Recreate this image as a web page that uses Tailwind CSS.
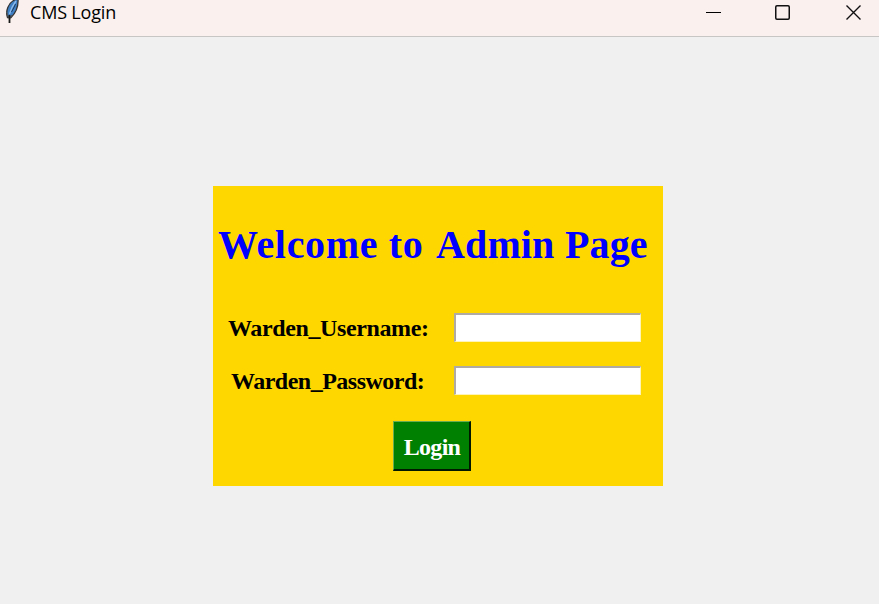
<!DOCTYPE html>
<html lang="en"><head><meta charset="utf-8"><title>CMS Login</title>
<script src="https://cdn.jsdelivr.net/npm/@tailwindcss/browser@4"></script></head>
<body class="w-[879px] h-[604px] overflow-hidden bg-[#f0f0f0] flex flex-col">
<header class="h-[37px] shrink-0 bg-[#faf0ee] border-b border-[#c8c6c5] flex items-start">
<svg class="w-[16px] h-[24px] ml-[4px]" viewBox="0 0 16 24"><path d="M3.500 17.500C1 11 4.500 3 10.500 0L14 -1C14.500 6 11.500 13 7 17.500Z" fill="#3f7fc4" stroke="#333" stroke-width="1.300"/><path d="M5.500 14C7 9 9 5 12 1" fill="none" stroke="#8fbdec" stroke-width="1.300"/><path d="M7.500 12C9 9 10.500 7 11.500 4" fill="none" stroke="#1d3c62" stroke-width="1"/><path d="M2.500 12L5.500 19L8 15" fill="none" stroke="#555" stroke-width="1"/><path d="M5.500 15V23" stroke="#191919" stroke-width="1.800"/></svg>
<span class="ml-[10px] text-[18px] leading-[24px] tracking-[-0.18px] font-['Open_Sans',sans-serif] text-black whitespace-nowrap">CMS Login</span>
<svg class="ml-auto w-[179px] h-[26px]" viewBox="0 0 179 26" fill="none" stroke="#111" stroke-width="1.4"><path d="M6 12.500H21" stroke="#000" stroke-width="1"/><rect x="75.750" y="5.750" width="13.500" height="13.500" rx="1.200" stroke-width="1.500"/><path d="M146.500 5.500L160.500 19.500M160.500 5.500L146.500 19.500"/></svg>
</header>
<main class="flex-1 pt-[149px] pl-[213px] font-['Liberation_Serif',serif] font-bold">
<section class="w-[450px] h-[300px] bg-[#ffd700] flex flex-col">
<h1 class="mt-[34px] ml-[5px] h-[50px] leading-[50px] text-[40px] tracking-[0.66px] text-[#0000ff] whitespace-nowrap">Welcome to <span class="ml-[2px] tracking-[0.1px]">Admin</span> <span class="tracking-[0.1px]">Page</span></h1>
<div class="mt-[43px] h-[29px] flex items-start"><label class="ml-[15px] mt-[1px] w-[226px] text-[24px] leading-[29px] tracking-[-0.38px]">Warden_Username:</label><input aria-label="Warden_Username" class="w-[187px] h-[29px] bg-white border-t-2 border-l-2 border-r border-b border-t-[#b0aaa5] border-l-[#b0aaa5] border-r-[#fff4b8] border-b-[#fff4b8]"></div>
<div class="mt-[24px] h-[29px] flex items-start"><label class="ml-[18px] mt-[1px] w-[223px] text-[24px] leading-[29px] tracking-[-0.5px]">Warden_Password:</label><input aria-label="Warden_Password" type="password" class="w-[187px] h-[29px] bg-white border-t-2 border-l-2 border-r border-b border-t-[#b0aaa5] border-l-[#b0aaa5] border-r-[#fff4b8] border-b-[#fff4b8]"></div>
<button class="mt-[26px] ml-[180px] w-[78px] h-[50px] pt-[3px] pl-px bg-[#008000] text-white text-[24px] leading-[29px] tracking-[-0.7px] border-t border-l border-b-2 border-r-2 border-t-[#6aad50] border-l-[#6aad50] border-b-[#001800] border-r-[#001800]">Login</button>
</section></main></body></html>
